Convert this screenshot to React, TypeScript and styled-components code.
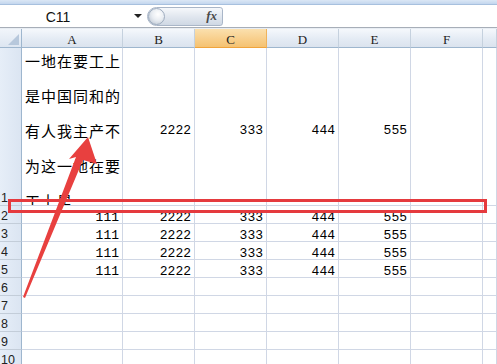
import React from "react";
import styled, { createGlobalStyle } from "styled-components";

const GlobalStyle = createGlobalStyle`
  html, body { margin: 0; padding: 0; background: #fff; overflow: hidden; }
  body { width: 497px; height: 364px; }
  * { box-sizing: border-box; }
`;

const Root = styled.div`
  position: relative;
  width: 497px;
  height: 364px;
  overflow: hidden;
  display: flex;
  flex-direction: column;
  background: #fff;
`;

const TopStrip = styled.div`
  height: 5px;
  flex: 0 0 5px;
  background: linear-gradient(#dbe7f5, #c3d6ee);
  border-bottom: 1px solid #a7c0de;
`;

const FormulaBar = styled.div`
  height: 23px;
  flex: 0 0 23px;
  display: flex;
  align-items: center;
  background: #fff;
  border-bottom: 1px solid #a7aeb8;
`;

const NameBox = styled.div`
  width: 146px;
  height: 100%;
  display: flex;
  align-items: center;
`;

const NameText = styled.span`
  flex: 0 0 116px;
  text-align: center;
  font-family: "Liberation Sans", Arial, sans-serif;
  font-size: 14px;
  color: #111;
  padding-top: 2px;
`;

const DropArrow = styled.span`
  margin-left: 18px;
  width: 0;
  height: 0;
  border-left: 4px solid transparent;
  border-right: 4px solid transparent;
  border-top: 4px solid #222;
`;

const FxButton = styled.div`
  width: 76px;
  height: 19px;
  margin-left: 1px;
  display: flex;
  align-items: center;
  justify-content: space-between;
  border: 1px solid #a9b6c8;
  border-radius: 10px 3px 3px 10px;
  background: linear-gradient(#f6f8fb, #e1e7ef 50%, #cfd8e4);
`;

const Knob = styled.span`
  width: 17px;
  height: 17px;
  border-radius: 50%;
  border: 1px solid #9fadbf;
  background: radial-gradient(circle at 60% 35%, #ffffff 0%, #e9edf2 45%, #b5c0ce 100%);
`;

const FxLabel = styled.span`
  font-family: "Liberation Serif", "Times New Roman", serif;
  font-style: italic;
  font-weight: bold;
  font-size: 13px;
  color: #4a4a4a;
  margin-right: 5px;
`;

const FormulaInput = styled.div`
  flex: 1;
  height: 100%;
  margin-left: 2px;
  background: #fff;
`;

const Gap = styled.div`
  height: 1px;
  flex: 0 0 1px;
  background: #e8edf3;
`;

const Sheet = styled.div`
  display: grid;
  grid-template-columns: 22px 101px 72px 72px 72px 72px 72px 1fr;
  grid-template-rows: 19px 158px repeat(9, 18px);
`;

const Corner = styled.div`
  position: relative;
  background: linear-gradient(#f1f5fa, #dde6f1);
  border-right: 1px solid #9eb6ce;
  border-bottom: 1px solid #9eb6ce;
  &::after {
    content: "";
    position: absolute;
    right: 2px;
    bottom: 2px;
    width: 0;
    height: 0;
    border-left: 11px solid transparent;
    border-bottom: 11px solid #b7c8dc;
  }
`;

const ColHeader = styled.div<{ $selected?: boolean }>`
  background: ${(p) =>
    p.$selected
      ? "linear-gradient(#fbe0ae, #f8cf8c 55%, #f5c271)"
      : "linear-gradient(#f5f8fc, #e4ebf4 55%, #dbe3ee)"};
  border-right: 1px solid ${(p) => (p.$selected ? "#efb35c" : "#c5d1de")};
  border-bottom: 1px solid ${(p) => (p.$selected ? "#f0a43c" : "#9eb6ce")};
  font-family: "Liberation Serif", "Times New Roman", serif;
  font-size: 13px;
  line-height: 14px;
  padding-top: 4px;
  text-align: center;
  color: #222;
`;

const RowHeader = styled.div`
  background: linear-gradient(90deg, #e6eef8, #dbe5f2);
  border-right: 1px solid #9eb6ce;
  border-bottom: 1px solid #c3cdd9;
  display: flex;
  align-items: flex-end;
  padding-left: 1px;
  font-family: "Liberation Sans", Arial, sans-serif;
  font-size: 12.5px;
  line-height: 13px;
  color: #222;
`;

const Cell = styled.div<{ $tall?: boolean }>`
  border-right: 1px solid #d0d7e5;
  border-bottom: 1px solid #d0d7e5;
  overflow: hidden;
  display: flex;
  align-items: ${(p) => (p.$tall ? "center" : "flex-start")};
  justify-content: flex-end;
  padding: ${(p) => (p.$tall ? "8px 3px 0 3px" : "3px 3px 0 3px")};
  font-family: "Liberation Mono", "Courier New", monospace;
  font-size: 13px;
  line-height: 18px;
  color: #000;
  white-space: nowrap;
`;

const TextCell = styled.div`
  border-right: 1px solid #d0d7e5;
  border-bottom: 1px solid #d0d7e5;
  overflow: hidden;
  display: flex;
  align-items: center;
  padding: 8px 0 0 3px;
`;

const WrapText = styled.div`
  width: 100%;
  font-family: "Noto Sans CJK SC", "Noto Sans", sans-serif;
  font-size: 15px;
  letter-spacing: 1px;
  line-height: 35px;
  color: #000;
  word-break: break-all;
`;

const Overlay = styled.svg`
  position: absolute;
  left: 0;
  top: 0;
  width: 497px;
  height: 364px;
  pointer-events: none;
`;

const cols = ["A", "B", "C", "D", "E", "F", ""];
const dataRows = [2, 3, 4, 5];
const emptyRows = [6, 7, 8, 9, 10];

export default function App() {
  return (
    <>
      <GlobalStyle />
      <Root>
        <TopStrip />
        <FormulaBar>
          <NameBox>
            <NameText>C11</NameText>
            <DropArrow />
          </NameBox>
          <FxButton>
            <Knob />
            <FxLabel>fx</FxLabel>
          </FxButton>
          <FormulaInput />
        </FormulaBar>
        <Gap />
        <Sheet>
          <Corner />
          {cols.map((c, i) => (
            <ColHeader key={i} $selected={c === "C"}>
              {c}
            </ColHeader>
          ))}

          <RowHeader>1</RowHeader>
          <TextCell>
            <WrapText>一地在要工上是中国同和的有人我主产不为这一地在要工上是</WrapText>
          </TextCell>
          <Cell $tall>2222</Cell>
          <Cell $tall>333</Cell>
          <Cell $tall>444</Cell>
          <Cell $tall>555</Cell>
          <Cell $tall />
          <Cell $tall />

          {dataRows.map((r) => (
            <React.Fragment key={r}>
              <RowHeader>{r}</RowHeader>
              <Cell>111</Cell>
              <Cell>2222</Cell>
              <Cell>333</Cell>
              <Cell>444</Cell>
              <Cell>555</Cell>
              <Cell />
              <Cell />
            </React.Fragment>
          ))}

          {emptyRows.map((r) => (
            <React.Fragment key={r}>
              <RowHeader>{r}</RowHeader>
              {cols.map((_, i) => (
                <Cell key={i} />
              ))}
            </React.Fragment>
          ))}
        </Sheet>

        <Overlay viewBox="0 0 497 364">
          <rect x="9.5" y="200.5" width="476" height="11" fill="none" stroke="#e53a3e" strokeWidth="3" />
          <polygon
            points="88,137 97,164 83,160 25,298 23,297 76,157 69,159"
            fill="#e8403f"
          />
        </Overlay>
      </Root>
    </>
  );
}
